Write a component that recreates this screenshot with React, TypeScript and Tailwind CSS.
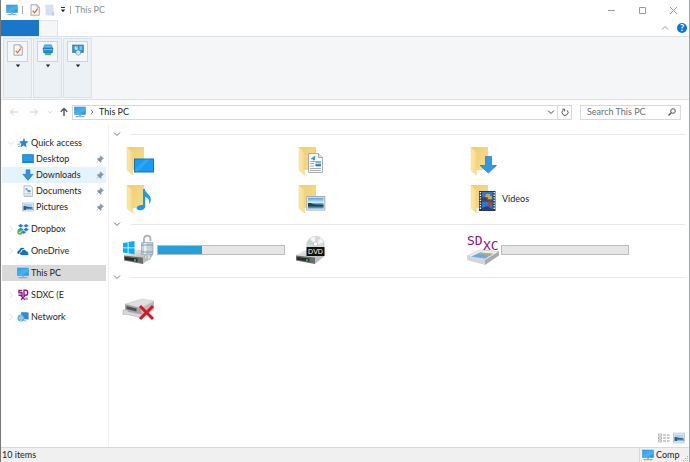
import type { ReactNode } from "react";

type IconProps = { className?: string };

function Monitor({ className = "h-3 w-3" }: IconProps) {
  return (
    <svg viewBox="0 0 12 12" className={className} aria-hidden="true">
      <defs>
        <linearGradient id="screen" x1="0" y1="0" x2="1" y2="1">
          <stop offset="0" stopColor="#2a9df0" />
          <stop offset="0.6" stopColor="#45b4f8" />
          <stop offset="1" stopColor="#1d86de" />
        </linearGradient>
      </defs>
      <rect x="0.5" y="1" width="11" height="7.5" fill="url(#screen)" stroke="#3c86b8" strokeWidth="0.5" />
      <path d="M5 9h2v1H5z" fill="#9fb4c2" />
      <path d="M1.5 10.2h9v1h-9z" fill="#6fa5c5" />
    </svg>
  );
}

function CheckPage({ className = "h-3 w-3" }: IconProps) {
  return (
    <svg viewBox="0 0 12 12" className={className} aria-hidden="true">
      <path d="M2 .8h6l2.3 2.4v8H2z" fill="#fafafa" stroke="#929292" strokeWidth="0.8" />
      <path d="M8 .8v2.4h2.3" fill="none" stroke="#929292" strokeWidth="0.7" />
      <path d="M3.7 6.8l1.8 2 3.2-4.3" fill="none" stroke="#e9703a" strokeWidth="1.3" />
    </svg>
  );
}

function BluePage() {
  return (
    <svg viewBox="0 0 12 12" className="h-3 w-3" aria-hidden="true">
      <path d="M1.5 .6h8v10.8h-8z" fill="#d3e1f3" />
      <path d="M7.5 8.5l2.5-1 .4 3.9H7.5z" fill="#bdd2ec" />
    </svg>
  );
}

function DriveStack() {
  return (
    <svg viewBox="0 0 12 12" className="h-3 w-3" aria-hidden="true">
      <path d="M2.5 .8h7l1 3.7h-9z" fill="#62b8ee" stroke="#2380bf" strokeWidth="0.5" />
      <path d="M1 4h10l-.7 5H1.7z" fill="#238fda" stroke="#176ba5" strokeWidth="0.5" />
      <path d="M2 5h8v1H2z" fill="#72c4f5" />
      <path d="M3 9h6v2.2H3z" fill="#43bd54" />
    </svg>
  );
}

function ControlPanel() {
  return (
    <svg viewBox="0 0 12 12" className="h-3 w-3" aria-hidden="true">
      <rect x="0.6" y="1" width="10.8" height="7.6" fill="#2993df" stroke="#477fa6" strokeWidth="0.7" />
      <circle cx="4.2" cy="4" r="1.9" fill="#b9e4fb" />
      <path d="M4.2 4V2.1A1.9 1.9 0 016 4z" fill="#eda13c" />
      <path d="M7.5 3h2.7M7.5 5h2.7" stroke="#fff" strokeWidth="0.8" />
      <path d="M4 7.3l2-1.5 2.6 1.6v2.8L6.3 11.4 4 10z" fill="#dce6ed" stroke="#7692a5" strokeWidth="0.6" />
    </svg>
  );
}

function Star() {
  return (
    <svg viewBox="0 0 12 12" className="h-3 w-3" aria-hidden="true">
      <path d="M7 .8l1.1 3.1 3.4.5-2.6 2.3.7 3.8-3-2-3.1 2 .9-3.8L2 4.4l3.7-.4z" fill="#2489da" />
      <path d="M.5 7.5l2.8-.9M.7 9.9l2.8-1.2" stroke="#5aa8e4" strokeWidth="0.9" />
    </svg>
  );
}

function DesktopIcon() {
  return (
    <svg viewBox="0 0 12 12" className="h-3 w-3" aria-hidden="true">
      <rect x="0.7" y="1.7" width="10.6" height="8" fill="#219bf2" stroke="#1176bd" strokeWidth="0.8" />
      <path d="M1.2 8.5h9.6v.8H1.2z" fill="#0d71c1" />
    </svg>
  );
}

function DownArrow() {
  return (
    <svg viewBox="0 0 12 12" className="h-3 w-3" aria-hidden="true">
      <path d="M4 .8h4v4.5h3.2L6 11.4.8 5.3H4z" fill="#3192df" stroke="#1c74ba" strokeWidth="0.5" />
    </svg>
  );
}

function DocIcon() {
  return (
    <svg viewBox="0 0 12 12" className="h-3 w-3" aria-hidden="true">
      <path d="M2 .8h6.5l1.9 2v8.6H2z" fill="#f4f7f9" stroke="#9aa4ab" strokeWidth="0.7" />
      <path d="M3.5 3.2h2v2h-2zM5.5 5h3v2.3h-3z" fill="#3fa1dd" />
      <path d="M3.3 8.5h5.7M3.3 10h5.7" stroke="#a4b5c1" strokeWidth="0.6" />
    </svg>
  );
}

function PictureIcon({ className = "h-3 w-3" }: IconProps) {
  return (
    <svg viewBox="0 0 12 12" className={className} aria-hidden="true">
      <rect x="0.5" y="2" width="11" height="8" fill="#f6f7f8" stroke="#a6adb2" strokeWidth="0.6" />
      <path d="M1.5 3h9v6h-9z" fill="#a8d4f2" />
      <path d="M1.5 5c3-.4 4 1.5 9 1.2V9h-9z" fill="#2c5f88" />
      <path d="M4 7.6h6.5V9H4z" fill="#89b8db" />
    </svg>
  );
}

function Dropbox() {
  return (
    <svg viewBox="0 0 12 12" className="h-3 w-3" aria-hidden="true">
      <path d="M3.7 1L6.5 2.8 3.7 4.6.9 2.8zM9 1l2.8 1.8L9 4.6 6.5 2.8zM3.7 4.8l2.8 1.8-2.8 1.8L.9 6.6zM9 4.8l2.8 1.8L9 8.4 6.5 6.6zM6.5 7.4l2.6 1.8-2.6 1.7-2.3-1.7z" fill="#167ddd" />
      <circle cx="3" cy="9" r="2.7" fill="#4eb553" />
      <path d="M1.7 9l1 1 1.7-2" fill="none" stroke="#fff" strokeWidth="0.8" />
    </svg>
  );
}

function OneDrive() {
  return (
    <svg viewBox="0 0 12 12" className="h-3 w-3" aria-hidden="true">
      <path d="M.6 8.8C-.3 6.8 1 5.4 2.2 5.5 2.4 3.1 5.6 1.3 7.6 4 5 3.7 3.8 5.2 3.8 6.5 2.1 7 2.2 8.3 2.6 9.1z" fill="#0d63b7" />
      <path d="M4.6 10c-2.3-.3-2-3 .1-2.9.1-2.8 3.6-3 4.4-.9 1.8-.1 2 1.5 1.7 2 1.4.2 1.1 1.8 0 1.8z" fill="#1273ce" />
    </svg>
  );
}

function SdSmall() {
  return (
    <svg viewBox="0 0 12 12" className="h-3 w-3" aria-hidden="true">
      <path d="M5.2 1.5H2v2.2h3v2.5H1.5M7 1.3v5h1.8c2.5 0 2.5-5 0-5zM4 6.8l4 4M8 6.8l-4 4" fill="none" stroke="#8e1791" strokeWidth="1.4" />
      <path d="M7 8.5h4v2.4H8z" fill="#cf9dae" />
    </svg>
  );
}

function NetworkIcon() {
  return (
    <svg viewBox="0 0 12 12" className="h-3 w-3" aria-hidden="true">
      <path d="M4.5 1.2l6.8.6v6.4l-6.8-.6z" fill="#2690df" stroke="#40779f" strokeWidth="0.5" />
      <circle cx="4" cy="7" r="3.2" fill="#5eb8e8" stroke="#3187b8" strokeWidth="0.5" />
      <path d="M1 7h6M4 4c-1.6 2-1.6 4 0 6 1.6-2 1.6-4 0-6" fill="none" stroke="#c7eafb" strokeWidth="0.5" />
      <path d="M6.5 9.5l3 .7" stroke="#9baab4" />
    </svg>
  );
}

function Pin() {
  return (
    <svg viewBox="0 0 8 8" className="h-2 w-2" aria-hidden="true">
      <path d="M4.4.7l3 3-.9.3-1.4 1.5.1 1.3-.7.5L1.2 4l.6-.6h1.3L4.4 1.8zM2.8 5.2L.7 7.5" fill="#8496a6" stroke="#8496a6" strokeWidth="0.6" />
    </svg>
  );
}

function Chevron({ className = "", dir = "down" }: IconProps & { dir?: "down" | "up" | "right" }) {
  const paths = { down: "M1 2.5l3 3 3-3", up: "M1 5.5l3-3 3 3", right: "M2.5 1l3 3-3 3" };
  return (
    <svg viewBox="0 0 8 8" className={`shrink-0 ${className}`} fill="none" stroke="currentColor" aria-hidden="true">
      <path d={paths[dir]} />
    </svg>
  );
}

function Caret() {
  return (
    <svg viewBox="0 0 6 4" className="h-1 w-1.5" aria-hidden="true">
      <path d="M.8.5h4.4L3 3.3z" fill="#222" />
    </svg>
  );
}

function Arrow({ dir = "left" }: { dir?: "left" | "right" | "up" }) {
  const paths = {
    left: "M9 5H1.5M4.8 1.7L1.5 5l3.3 3.3",
    right: "M1 5h7.5M5.2 1.7L8.5 5 5.2 8.3",
    up: "M5 9V1.5M1.7 4.8L5 1.5l3.3 3.3",
  };
  return (
    <svg viewBox="0 0 10 10" className="h-2.5 w-2.5" fill="none" stroke="currentColor" strokeWidth={dir === "up" ? 1.4 : 1} aria-hidden="true">
      <path d={paths[dir]} />
    </svg>
  );
}

/* Large 32px tiles */

function Tile32({ children }: { children: ReactNode }) {
  return (
    <svg viewBox="0 0 32 32" className="h-8 w-8 shrink-0 overflow-visible" aria-hidden="true">
      <defs>
        <linearGradient id="folderBack" x1="0" y1="0" x2="1" y2="1">
          <stop offset="0" stopColor="#efce74" />
          <stop offset="1" stopColor="#f8dc8a" />
        </linearGradient>
        <linearGradient id="folderFront" x1="0" y1="0" x2="1" y2="0">
          <stop offset="0" stopColor="#fde9a9" />
          <stop offset="1" stopColor="#f8d97f" />
        </linearGradient>
        <linearGradient id="metal" x1="0" y1="0" x2="1" y2="1">
          <stop offset="0" stopColor="#f3f3f3" />
          <stop offset="1" stopColor="#b5b7b8" />
        </linearGradient>
        <linearGradient id="sky" x1="0" y1="0" x2="0" y2="1">
          <stop offset="0" stopColor="#4f9fe5" />
          <stop offset="0.45" stopColor="#d5edfa" />
          <stop offset="0.55" stopColor="#5b8db0" />
          <stop offset="0.8" stopColor="#326e9e" />
          <stop offset="1" stopColor="#75aedc" />
        </linearGradient>
      </defs>
      {children}
    </svg>
  );
}

function FolderShape() {
  return (
    <>
      <path d="M4 2h17v23H9z" fill="url(#folderBack)" />
      <path d="M4 2.2l5.5 5V30L4 25.5z" fill="url(#folderFront)" stroke="#f0d27b" strokeWidth="0.4" />
    </>
  );
}

function DriveShape() {
  return (
    <>
      <path d="M1 21.5l10-5.5h18.5L20 23.5z" fill="url(#metal)" stroke="#c9caca" strokeWidth="0.3" />
      <path d="M20 23.5l9.5-7.5v6L20 30z" fill="#bcbfc0" />
      <path d="M1 21.5l19 2V30L1 26.5z" fill="#696d6f" />
      <path d="M2 23l12.5 1.6v3.2L2 25.7z" fill="#282a2b" />
      <path d="M11 25.2l2 .3v1.5l-2-.3z" fill="#30d05b" />
    </>
  );
}

const folderBadges: Record<string, ReactNode> = {
  Desktop: (
    <>
      <rect x="11.5" y="14" width="19" height="13" fill="#159cf9" stroke="#1a70a9" />
      <path d="M12 24l10-9.5h5L15 26.5h-3z" fill="#3badf9" opacity="0.6" />
    </>
  ),
  Documents: (
    <>
      <path d="M13.5 8.5h10l4 4v15h-14z" fill="#fbfcfd" stroke="#9ba1a6" strokeWidth="0.9" />
      <path d="M23.5 8.5v4h4" fill="#e4e8eb" stroke="#8d959b" strokeWidth="0.8" />
      <path d="M16 14l4-3-.6 4h-1.5l.3-1.8z" fill="#2490d8" stroke="#2490d8" strokeWidth="0.6" />
      <path d="M15 16.5h11" stroke="#5bacdf" strokeWidth="0.8" />
      <path d="M15 18.5h4M15 21h4M15 23.5h11M15 25.5h11" stroke="#8f9aa3" strokeWidth="0.8" />
      <rect x="20.5" y="17" width="5.5" height="4.5" fill="url(#sky)" />
    </>
  ),
  Downloads: <path d="M18.5 11.5h6v9h5L21.3 28l-8.2-7.5h5.4z" fill="#3098e7" stroke="#2576b6" strokeWidth="0.7" />,
  Music: (
    <path d="M20 6h1.7c.6 4.2 6 5.5 6.1 10.4 0 2.2-.9 3.6-2 4.6 1.4-4.2-1-6.4-3.6-7.3v9.8c0 2.3-2.8 4-5.8 3.7-5.2-.7-2.4-6 3.6-5.2z" fill="#149af4" />
  ),
  Pictures: (
    <>
      <rect x="11.8" y="13.5" width="18" height="13.5" fill="#fbfbfb" stroke="#a4a9ad" />
      <rect x="13" y="14.7" width="15.6" height="11" fill="url(#sky)" />
      <path d="M13 20c4-.5 5 2 11 1.8l4.6.4v1H13z" fill="#1b493e" />
    </>
  ),
  Videos: (
    <>
      <rect x="12" y="8" width="16.5" height="20" fill="#30373f" />
      <path d="M13.4 9v18M27.2 9v18" stroke="#eff3f6" strokeWidth="1.4" strokeDasharray="1.3 1.3" />
      <path d="M15 9h10.6v8.5H15zM15 18.5h10.6V27H15z" fill="#2977dc" />
      <path d="M19 11h4v2h2v3h-4v-2h-3z" fill="#d0a931" />
      <path d="M15 14.5h4l2 3h-6z" fill="#5b3448" />
      <path d="M21 19h4v3h-2v2h-2z" fill="#ac4136" />
      <path d="M15 25l5-2 5.6 3v1H15z" fill="#1c4392" />
    </>
  ),
};

function FolderTile({ name }: { name: string }) {
  return (
    <Tile32>
      <FolderShape />
      {folderBadges[name]}
    </Tile32>
  );
}

function SystemDrive() {
  return (
    <Tile32>
      <DriveShape />
      <path d="M0 9l4.7-.8v5.2H0zM5.5 8l6-1v6.4h-6zM0 14.2h4.7v5L0 18.5zM5.5 14.2h6v6l-6-.9z" fill="#08aeea" />
      <path d="M21 9V5c0-4.5 6.5-4.5 6.5 0v2" fill="none" stroke="#a9b1b7" strokeWidth="1.8" />
      <path d="M18.5 8.5h11.5v12H18.5z" fill="#c9cfd3" stroke="#8c98a0" strokeWidth="0.6" />
      <path d="M21 9h2.5v11H21z" fill="#eef1f2" />
      <path d="M18.5 11h11.5M18.5 18h11.5" stroke="#6f9fc2" />
      <circle cx="24.5" cy="23" r="3.2" fill="#d8dcde" stroke="#999fa3" strokeWidth="0.6" />
      <path d="M24 20v6" stroke="#9da4a9" />
    </Tile32>
  );
}

function DvdDrive() {
  return (
    <Tile32>
      <DriveShape />
      <circle cx="20.5" cy="11" r="8.7" fill="#d8dadb" stroke="#b7babb" strokeWidth="0.6" />
      <path d="M20.5 11L15 4.5a8.5 8.5 0 015-2zM20.5 11l8-2.5a8.5 8.5 0 00-3-4.5z" fill="#f5f6f6" />
      <path d="M20.5 11l-8.3-1a8.5 8.5 0 012-4.6z" fill="#bcd7c8" />
      <circle cx="20.5" cy="10" r="2.2" fill="#fff" stroke="#aaa" strokeWidth="0.6" />
      <rect x="11.5" y="13" width="18" height="9" rx="0.6" fill="#111" />
      <text x="20.5" y="20" textAnchor="middle" className="font-['Liberation_Sans',sans-serif] text-[7px]" fill="#fff">DVD</text>
    </Tile32>
  );
}

function SdxcDrive() {
  return (
    <Tile32>
      <path d="M0 22l13-6 19 1.5L18 26z" fill="#eceeef" stroke="#b4b7b9" strokeWidth="0.5" />
      <path d="M0 22l18 4v5L0 26z" fill="#d3d6d8" />
      <path d="M18 26l14-8.5v4L18 31z" fill="#a8acaf" />
      <path d="M4 22.5l9-4 13 1.2-8 5z" fill="#74a9d4" />
      <path d="M13 18.5l13 1.2-3 2-10-2.3z" fill="#c8ae58" />
      <text x="0" y="11" className="font-['DejaVu_Sans_Mono',monospace] text-[13px]" fill="#85148b">SD</text>
      <text x="16" y="16" className="font-['DejaVu_Sans_Mono',monospace] text-[13px]" fill="#85148b">XC</text>
    </Tile32>
  );
}

function OfflineDrive() {
  return (
    <Tile32>
      <path d="M2 10l17-5 12 2-13 7z" fill="#dedfe0" stroke="#b9bbbc" strokeWidth="0.4" />
      <path d="M2 10l16 4v9L2 19z" fill="#a3a6a8" />
      <path d="M3.5 12l10 2.5v3l-10-2.5z" fill="#4e5254" />
      <path d="M18 14l13-7v9l-13 7z" fill="#b9bcbe" />
      <path d="M0 16h5v1.5l15 3V24L4 20.5H0z" fill="#d6d8d9" stroke="#999" strokeWidth="0.4" />
      <path d="M17 12L30 25M30 12L17 25" stroke="#d9161d" strokeWidth="3" />
    </Tile32>
  );
}

function Capacity({ label, percent }: { label: string; percent: number }) {
  return (
    <div
      role="progressbar"
      aria-label={label}
      aria-valuenow={percent}
      className="ml-0.5 h-2.5 w-32 border border-[#bcbcbc] bg-[#e6e6e6]"
    >
      <div className="h-full bg-[#26a0da]" style={{ width: `${percent}%` }} />
    </div>
  );
}

function SectionHeader({ label }: { label: string }) {
  return (
    <div className="flex h-3 items-center pr-1 pl-1">
      <button aria-label={label} className="text-[#707070]">
        <Chevron className="h-2 w-2" />
      </button>
      <div className="ml-2.5 h-px flex-1 bg-[#e6e6e6]" />
    </div>
  );
}

const tileGrid = "grid grid-cols-[172px_172px_1fr] pl-3.5";

type NavItemProps = { icon: ReactNode; label: string; nested?: boolean; tint?: string; expand?: "down" | "right" };

function NavItem({ icon, label, nested, tint = "", expand = "right" }: NavItemProps) {
  return (
    <li>
      <button className={`flex h-4 w-full items-center gap-0.5 pr-0.5 ${tint} ${nested ? "pl-5" : "pl-[5px]"}`}>
        {!nested && <Chevron dir={expand} className="h-2 w-2 text-[#e0e0e0]" />}
        {icon}
        <span className="whitespace-nowrap">{label}</span>
        {nested && (
          <span className="ml-auto">
            <Pin />
          </span>
        )}
      </button>
    </li>
  );
}

const ribbonGroups = [
  { label: "Location", icon: <CheckPage /> },
  { label: "Network", icon: <DriveStack /> },
  { label: "System", icon: <ControlPanel /> },
];

export default function App() {
  return (
    <div className="flex min-h-screen flex-col border-r border-l border-r-[#9fa7ad] border-l-[#777] bg-white font-['Lato','Open_Sans',sans-serif] text-[9px] leading-3 text-[#1c1c1c]">
      <header className="flex h-5 items-center pl-[5px]">
        <Monitor />
        <span className="ml-1 h-2 w-px bg-[#aaa]" />
        <button aria-label="Properties" className="ml-1.5"><CheckPage /></button>
        <button aria-label="New folder" className="ml-[3px]"><BluePage /></button>
        <button aria-label="Customize toolbar" className="ml-1 flex flex-col items-center gap-px">
          <span className="h-px w-1 bg-[#333]" />
          <Caret />
        </button>
        <span className="ml-1 h-2 w-px bg-[#aaa]" />
        <h1 className="ml-1 text-[#8c8c8c]">This PC</h1>
        <div className="ml-auto flex items-center gap-6 pr-3 text-[#999]">
          <button aria-label="Minimize"><svg viewBox="0 0 7 7" className="h-[7px] w-[7px]"><path d="M0 3.5h7" stroke="currentColor" /></svg></button>
          <button aria-label="Maximize"><svg viewBox="0 0 7 7" className="h-[7px] w-[7px]"><path d="M.5.5h6v6h-6z" fill="none" stroke="currentColor" /></svg></button>
          <button aria-label="Close"><svg viewBox="0 0 7 7" className="h-[7px] w-[7px]"><path d="M0 0l7 7M7 0L0 7" stroke="currentColor" /></svg></button>
        </div>
      </header>

      <div className="flex h-4 items-stretch">
        <button aria-label="File" className="w-[38px] bg-[#1a76c8]" />
        <button aria-label="Computer" className="w-[19px] border-t border-r border-[#e2e3e4] bg-[#f5f6f7]" />
        <div className="ml-auto flex items-center gap-2 pr-0.5">
          <button aria-label="Collapse ribbon" className="text-[#999]"><Chevron dir="up" className="h-2 w-2" /></button>
          <button aria-label="Help" className="flex h-2.5 w-2.5 items-center justify-center rounded-full bg-[#0878d6] font-bold text-white">?</button>
        </div>
      </div>

      <div className="flex h-16 gap-px border-t border-b border-[#dfe0e1] bg-[#f5f6f7] py-px pl-0.5">
        {ribbonGroups.map((group) => (
          <button key={group.label} aria-label={group.label} className="flex w-[29px] flex-col items-center border border-[#d0e4f7] bg-[#ecf1f6] pt-0.5">
            <span className="flex h-[21px] w-[21px] items-center justify-center border border-[#b9d8f5] bg-[#f4f7fa] pb-1">{group.icon}</span>
            <span className="mt-0.5"><Caret /></span>
          </button>
        ))}
      </div>

      <div className="flex h-6 items-center pr-2 pl-2">
        <button aria-label="Back" className="text-[#d0d0d0]"><Arrow /></button>
        <button aria-label="Forward" className="ml-2.5 text-[#d0d0d0]"><Arrow dir="right" /></button>
        <button aria-label="Recent locations" className="ml-2 text-[#d0d0d0]"><Chevron className="h-1.5 w-1.5" /></button>
        <button aria-label="Up" className="ml-1.5 text-[#555]"><Arrow dir="up" /></button>
        <div className="ml-[3px] flex h-[15px] flex-1 items-center border border-[#d9d9d9] pl-px">
          <Monitor />
          <Chevron dir="right" className="ml-[3px] h-1.5 w-1.5 text-[#333]" />
          <button className="ml-1">This PC</button>
          <button aria-label="Previous locations" className="mr-0.5 ml-auto text-[#444]"><Chevron className="h-2 w-2" /></button>
          <button aria-label="Refresh" className="flex h-full w-3.5 items-center justify-center border-l border-[#d9d9d9] text-[#555]">
            <svg viewBox="0 0 8 8" className="h-2 w-2" fill="none" stroke="currentColor">
              <path d="M2 2.2a3 3 0 104.2.1M1.2 1.2h2.4v2.2" />
            </svg>
          </button>
        </div>
        <label className="ml-2 flex h-[15px] w-[101px] items-center border border-[#d9d9d9] pr-1 pl-1.5">
          <input type="search" aria-label="Search This PC" placeholder="Search This PC" className="w-full min-w-0 outline-none placeholder:text-[#6d6d6d]" />
          <svg viewBox="0 0 8 8" className="h-2 w-2 shrink-0" fill="none" stroke="#555" aria-hidden="true">
            <circle cx="5" cy="3" r="2.3" />
            <path d="M3.3 4.7L.5 7.5" strokeWidth="1.3" />
          </svg>
        </label>
      </div>

      <div className="flex flex-1">
        <nav aria-label="Folders" className="w-[108px] shrink-0 border-r border-[#f0f0f0] pt-[11px] pr-0.5 pl-px">
          <ul>
            <NavItem icon={<Star />} label="Quick access" expand="down" />
            <NavItem nested icon={<DesktopIcon />} label="Desktop" />
            <NavItem nested icon={<DownArrow />} label="Downloads" tint="bg-[#e5f3ff]" />
            <NavItem nested icon={<DocIcon />} label="Documents" />
            <NavItem nested icon={<PictureIcon />} label="Pictures" />
          </ul>
          <ul className="mt-1.5 flex flex-col gap-1.5">
            <NavItem icon={<Dropbox />} label="Dropbox" />
            <NavItem icon={<OneDrive />} label="OneDrive" />
            <NavItem icon={<Monitor />} label="This PC" tint="bg-[#d9d9d9]" />
            <NavItem icon={<SdSmall />} label="SDXC (E" />
            <NavItem icon={<NetworkIcon />} label="Network" />
          </ul>
        </nav>

        <main className="flex flex-1 flex-col pt-1">
          <SectionHeader label="Folders" />
          <div className={`${tileGrid} pt-0.5`}>
            {["Desktop", "Documents", "Downloads", "Music", "Pictures", "Videos"].map((name) => (
              <button key={name} aria-label={name} className="flex h-[38px] items-center">
                <FolderTile name={name} />
                {name === "Videos" && <span className="ml-[3px]">Videos</span>}
              </button>
            ))}
          </div>
          <SectionHeader label="Devices and drives" />
          <div className={`${tileGrid} pt-px pb-0.5`}>
            <div className="flex h-[38px] items-center"><SystemDrive /><Capacity label="System drive" percent={35} /></div>
            <div className="flex h-[38px] items-center"><DvdDrive /></div>
            <div className="flex h-[38px] items-center"><SdxcDrive /><Capacity label="SDXC" percent={0} /></div>
          </div>
          <SectionHeader label="Network locations" />
          <div className={`${tileGrid} pt-2`}>
            <div className="flex h-[38px] items-center"><OfflineDrive /></div>
          </div>
          <div className="mt-auto flex justify-end gap-[3px] pr-1 pb-[3px]">
            <button aria-label="Details view">
              <svg viewBox="0 0 12 12" className="h-3 w-3" aria-hidden="true">
                <path d="M.5 2h3v2h-3zM.5 5h3v2h-3zM.5 8h3v2h-3z" fill="none" stroke="#9a9a9a" strokeWidth="0.7" />
                <path d="M5 3h3M9 3h2.5M5 6h3M9 6h2.5M5 9h3M9 9h2.5" stroke="#888" strokeWidth="0.9" />
              </svg>
            </button>
            <button aria-label="Large icons view" className="bg-[#e0f0fc]"><PictureIcon /></button>
          </div>
        </main>
      </div>

      <footer className="flex h-[15px] items-center border-t border-[#d9d9d9] bg-[#f0f0f0] pl-px">
        <span>10 items</span>
        <div className="ml-auto flex h-full w-[50px] items-center border-l border-[#d7d7d7] pl-0.5">
          <Monitor />
          <span className="ml-0.5">Comp</span>
          <svg viewBox="0 0 6 6" className="mt-auto ml-auto h-1.5 w-1.5" fill="#b5b5b5" aria-hidden="true">
            <path d="M4 0h1v1H4zM2 2h1v1H2zM4 2h1v1H4zM0 4h1v1H0zM2 4h1v1H2zM4 4h1v1H4z" />
          </svg>
        </div>
      </footer>
    </div>
  );
}
